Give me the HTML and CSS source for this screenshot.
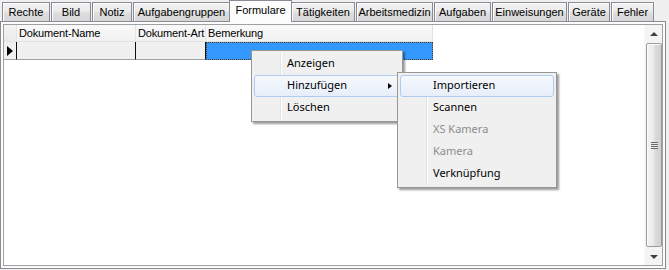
FILE: index.html
```html
<!DOCTYPE html>
<html>
<head>
<meta charset="utf-8">
<link rel="stylesheet" href="styles.css">
</head>
<body>
<div class="app">
  <div class="tabs">
    <div class="tab w-rechte">Rechte</div>
    <div class="tab w-bild">Bild</div>
    <div class="tab w-notiz">Notiz</div>
    <div class="tab w-aufg">Aufgabengruppen</div>
    <div class="tab active w-form">Formulare</div>
    <div class="tab w-taet">Tätigkeiten</div>
    <div class="tab w-arb">Arbeitsmedizin</div>
    <div class="tab w-aufgaben">Aufgaben</div>
    <div class="tab w-einw">Einweisungen</div>
    <div class="tab w-ger">Geräte</div>
    <div class="tab w-fehler">Fehler</div>
  </div>
  <div class="panel">
    <div class="grid">
      <div class="grid-body">
        <div class="hrow">
          <div class="hcell rowhead"></div>
          <div class="hcell c-name">Dokument-Name</div>
          <div class="hcell c-art">Dokument-Art</div>
          <div class="hcell c-bem">Bemerkung</div>
        </div>
        <div class="drow">
          <div class="dcell rowhead"><span class="arrow"></span></div>
          <div class="dcell c-name"></div>
          <div class="dcell c-art"></div>
          <div class="dcell c-bem selected"></div>
        </div>
      </div>
      <div class="vscroll">
        <div class="sbtn"><span class="tri-up"></span></div>
        <div class="track"><div class="thumb"><span class="grip"></span></div></div>
        <div class="sbtn"><span class="tri-down"></span></div>
      </div>
    </div>
  </div>

  <div class="menu menu-main">
    <div class="menu-sep"></div>
    <div class="mi">Anzeigen</div>
    <div class="mi hover">Hinzufügen<span class="sub-arrow"></span></div>
    <div class="mi">Löschen</div>
  </div>
  <div class="menu menu-sub">
    <div class="menu-sep"></div>
    <div class="mi hover">Importieren</div>
    <div class="mi">Scannen</div>
    <div class="mi disabled">XS Kamera</div>
    <div class="mi disabled">Kamera</div>
    <div class="mi">Verknüpfung</div>
  </div>
</div>
</body>
</html>
```

FILE: styles.css
```css
html, body {
  margin: 0;
  padding: 0;
}
body {
  background: #f0f0f0;
  width: 669px;
  height: 270px;
  overflow: hidden;
}
.app {
  position: relative;
  width: 669px;
  height: 270px;
  font-family: "Liberation Sans", Arial, sans-serif;
  font-size: 11px;
  color: #000;
}
.tabs {
  display: flex;
  align-items: flex-end;
  height: 21px;
  padding-left: 2px;
  position: relative;
  z-index: 2;
}
.tab {
  box-sizing: border-box;
  height: 19px;
  border: 1px solid #898c95;
  border-bottom: none;
  background: linear-gradient(#f3f3f3, #ebebeb 45%, #dedede 55%, #d6d6d6);
  box-shadow: inset 1px 1px 0 #fcfcfc;
  text-align: center;
  line-height: 18px;
  white-space: nowrap;
  margin-right: 1px;
}
.tab.active {
  height: 22px;
  margin-bottom: -1px;
  background: #fcfcfc;
  box-shadow: none;
  line-height: 19px;
  margin-left: -2px;
  margin-right: -1px;
  padding-bottom: 2px;
  border-color: #898c95;
}
.w-rechte { width: 48px; }
.w-bild { width: 40px; }
.w-notiz { width: 40px; }
.w-aufg { width: 97px; }
.w-form { width: 63px; }
.w-taet { width: 64px; }
.w-arb { width: 77px; }
.w-aufgaben { width: 57px; }
.w-einw { width: 75px; }
.w-ger { width: 42px; }
.w-fehler { width: 43px; }

.panel {
  box-sizing: border-box;
  width: 666px;
  height: 248px;
  border: 1px solid #898c95;
  background: #fcfcfc;
  padding: 2px;
  position: relative;
  z-index: 1;
}
.grid {
  box-sizing: border-box;
  width: 660px;
  height: 242px;
  border: 1px solid #a0a0a0;
  background: #ffffff;
  display: flex;
}
.grid-body {
  flex: 1;
  display: flex;
  flex-direction: column;
}
.hrow, .drow {
  display: flex;
}
.hrow {
  height: 17px;
}
.hcell {
  box-sizing: border-box;
  height: 17px;
  background: linear-gradient(#f9f9f9, #f1f1f1);
  border-right: 1px solid #e3e3e3;
  border-bottom: 1px solid #e3e3e3;
  padding-left: 2px;
  line-height: 16px;
  letter-spacing: -0.15px;
  white-space: nowrap;
  overflow: hidden;
}
.hcell.rowhead {
  background: linear-gradient(#f4f4f4, #ebebeb);
}
.rowhead { width: 13px; }
.c-name { width: 119px; }
.c-art { width: 70px; }
.c-bem { width: 227px; }
.drow {
  height: 18px;
}
.dcell {
  box-sizing: border-box;
  height: 18px;
  background: #f0f0f0;
  border-right: 1px solid #101010;
  border-bottom: 1px solid #a0a0a0;
  position: relative;
}
.arrow {
  position: absolute;
  left: 3px;
  top: 4px;
  width: 0;
  height: 0;
  border-top: 5px solid transparent;
  border-bottom: 5px solid transparent;
  border-left: 6px solid #000;
}
.dcell.selected {
  background: #3399ff;
  border: 1px dotted #5a3a10;
}

.vscroll {
  width: 17px;
  display: flex;
  flex-direction: column;
  background: #f4f4f4;
  border-left: 1px solid #f8f8f8;
}
.sbtn {
  height: 17px;
  display: flex;
  align-items: center;
  justify-content: center;
}
.track {
  flex: 1;
  padding: 1px 0;
  display: flex;
}
.thumb {
  flex: 1;
  margin: 0 0 0 1px;
  box-sizing: border-box;
  border: 1px solid #9b9b9b;
  border-radius: 2px;
  background: linear-gradient(90deg, #f4f4f4, #e9e9e9 50%, #dcdcdc 55%, #d0d0d0);
  box-shadow: inset 1px 1px 0 #fdfdfd;
  display: flex;
  align-items: center;
  justify-content: center;
}
.grip {
  width: 7px;
  height: 7px;
  background: repeating-linear-gradient(#6a6a6a 0, #6a6a6a 1px, #e8e8e8 1px, #e8e8e8 2px);
}
.tri-up {
  width: 0; height: 0;
  border-left: 4px solid transparent;
  border-right: 4px solid transparent;
  border-bottom: 4px solid #404040;
}
.tri-down {
  width: 0; height: 0;
  border-left: 4px solid transparent;
  border-right: 4px solid transparent;
  border-top: 4px solid #404040;
}

.menu {
  position: absolute;
  box-sizing: border-box;
  background: #f0f0f0;
  border: 1px solid #979797;
  box-shadow: 2px 2px 2px rgba(0, 0, 0, 0.4);
  padding: 2px;
  font-family: "Noto Sans", "Open Sans", sans-serif;
  font-size: 11px;
  z-index: 5;
}
.menu-main {
  left: 251px;
  top: 50px;
  width: 152px;
}
.menu-sub {
  left: 397px;
  top: 72px;
  width: 160px;
  z-index: 6;
}
.menu-sep {
  position: absolute;
  left: 28px;
  top: 2px;
  bottom: 2px;
  width: 1px;
  background: #e2e3e3;
  border-right: 1px solid #ffffff;
}
.mi {
  position: relative;
  box-sizing: border-box;
  height: 22px;
  line-height: 18px;
  padding-left: 32px;
  border: 1px solid transparent;
  border-radius: 3px;
  white-space: nowrap;
}
.mi.hover {
  border-color: #aeccf1;
  background: linear-gradient(#f6f9fd, #e6eefa);
}
.mi.disabled {
  color: #8d8d8d;
}
.sub-arrow {
  position: absolute;
  left: 133px;
  top: 7px;
  width: 0; height: 0;
  border-top: 3.5px solid transparent;
  border-bottom: 3.5px solid transparent;
  border-left: 4px solid #000;
}
```
